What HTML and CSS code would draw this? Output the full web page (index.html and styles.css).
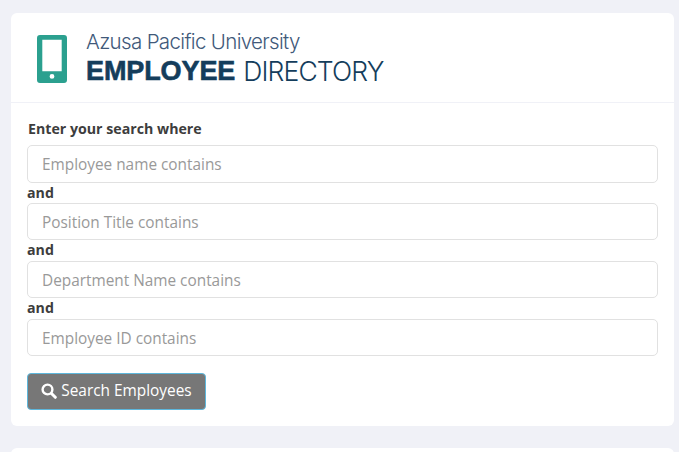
FILE: index.html
```html
<!DOCTYPE html>
<html lang="en">
<head>
<meta charset="utf-8">
<title>Employee Directory</title>
<link rel="stylesheet" href="styles.css">
</head>
<body>
<main class="page">
  <section class="card">
    <header class="card-header">
      <div class="logo">
        <svg class="logo-icon" width="30" height="48" viewBox="0 0 30 48" aria-hidden="true">
          <path fill="#2ba08f" fill-rule="evenodd" d="M3 0h24a3 3 0 0 1 3 3v42a3 3 0 0 1-3 3H3a3 3 0 0 1-3-3V3a3 3 0 0 1 3-3zM5.300 4.800v31.400h19.400V4.800zM15 39a2.400 2.400 0 1 0 0 4.800a2.400 2.400 0 0 0 0-4.800z"/>
        </svg>
        <div class="logo-text">
          <div class="logo-top">Azusa Pacific University</div>
          <div class="logo-bottom"><b class="logo-strong">EMPLOYEE</b> <span class="logo-light">DIRECTORY</span></div>
        </div>
      </div>
    </header>
    <form class="card-body">
      <label class="lead">Enter your search where</label>
      <input class="field" type="text" placeholder="Employee name contains">
      <label class="joiner">and</label>
      <input class="field" type="text" placeholder="Position Title contains">
      <label class="joiner">and</label>
      <input class="field" type="text" placeholder="Department Name contains">
      <label class="joiner">and</label>
      <input class="field" type="text" placeholder="Employee ID contains">
      <button class="btn" type="button">
        <svg class="btn-icon" width="16" height="16" viewBox="0 0 16 16" aria-hidden="true">
          <circle cx="6.500" cy="6.500" r="4.900" fill="none" stroke="#fff" stroke-width="2.400"/>
          <path d="M10.500 10.500L14.300 14.300" stroke="#fff" stroke-width="3" stroke-linecap="round"/>
        </svg>
        <span>Search Employees</span>
      </button>
    </form>
  </section>
  <section class="card card-next"></section>
</main>
</body>
</html>
```
FILE: styles.css
```css
* { box-sizing: border-box; }
html, body { margin: 0; height: 100%; overflow: hidden; }
body {
  background: #f0f1f7;
  font-family: "Open Sans", "Liberation Sans", sans-serif;
  color: #3d3d3d;
  font-size: 14px;
}
.page {
  padding: 13px 5px 0 11px;
  display: flex;
  flex-direction: column;
  gap: 22px;
}
.card { background: #fff; border-radius: 6px; }
.card-next { height: 60px; }
.card-header {
  height: 90px;
  border-bottom: 1px solid #f0f1f7;
  padding: 22px 0 0 26px;
}
.logo { display: flex; gap: 19px; }
.logo-icon { flex: none; }
.logo-text { margin-top: -5px; }
.logo-top {
  font-family: Inter, "Liberation Sans", sans-serif;
  font-weight: 300;
  font-size: 20.5px;
  line-height: 24px;
  letter-spacing: -0.66px;
  color: #41597a;
}
.logo-bottom {
  font-size: 27px;
  line-height: 34px;
  color: #143d5c;
  white-space: nowrap;
  display: flex;
  gap: 8px;
}
.logo-strong {
  font-family: "Liberation Sans", sans-serif;
  font-weight: 700;
  letter-spacing: -0.1px;
  -webkit-text-stroke: 0.6px #143d5c;
}
.logo-light {
  font-family: Inter, "Liberation Sans", sans-serif;
  font-weight: 300;
  font-size: 26.5px;
  letter-spacing: -0.85px;
}
.card-body {
  padding: 16px 16px 16px;
  display: flex;
  flex-direction: column;
}
.lead, .joiner { font-weight: 700; font-size: 14.2px; line-height: 19px; color: #3d3d3d; }
.lead { margin-left: 1px; margin-bottom: 7.4px; }
.joiner { height: 20.7px; }
.field {
  display: block;
  width: 100%;
  height: 37.2px;
  flex: none;
  border: 1px solid #e1e1e1;
  border-radius: 5px;
  padding: 1px 14px 0;
  background: #fff;
  font: 400 15.36px "Open Sans", sans-serif;
  color: #3d3d3d;
}
.field::placeholder { color: #999; opacity: 1; }
.btn {
  margin-top: 17px;
  align-self: flex-start;
  width: 179px;
  height: 37px;
  display: flex;
  align-items: center;
  justify-content: center;
  gap: 4px;
  background: #777;
  border: 1px solid #5db7dc;
  border-radius: 4px;
  color: #fff;
  font: 400 15.4px "Open Sans", sans-serif;
  padding: 0 0 2px;
}
.btn-icon { flex: none; }
```
